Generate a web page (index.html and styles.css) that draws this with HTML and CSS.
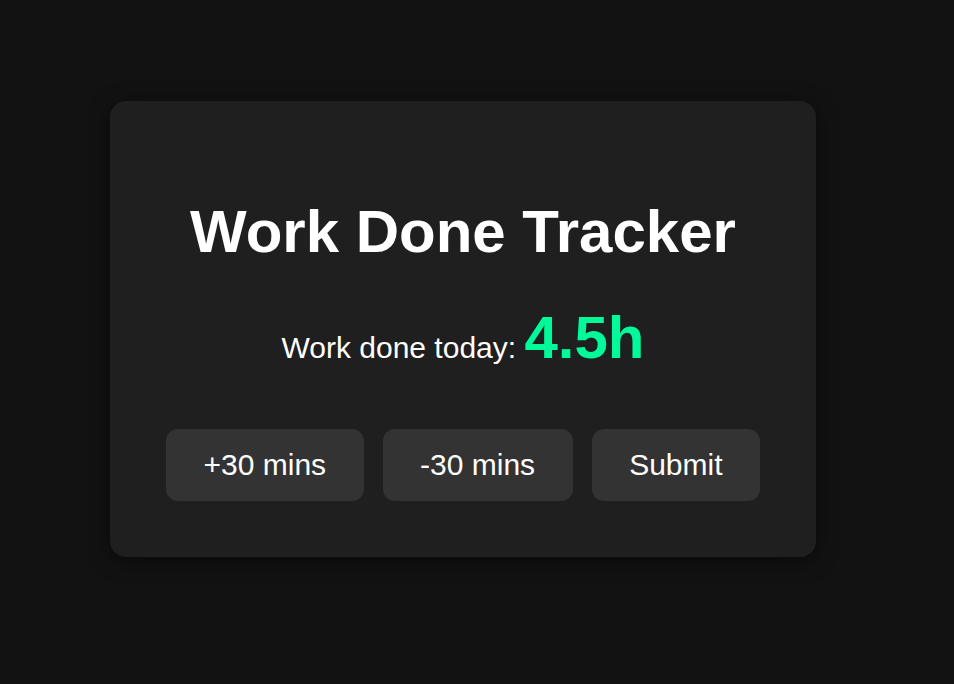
FILE: index.html
```html
<!DOCTYPE html>
<html lang="en">
<head>
<meta charset="utf-8">
<title>Work Done Tracker</title>
<link rel="stylesheet" href="styles.css">
</head>
<body>
  <main class="card">
    <h1 class="title">Work Done Tracker</h1>
    <p class="status">Work done today: <span class="hours">4.5h</span></p>
    <div class="actions">
      <button class="btn" type="button">+30 mins</button>
      <button class="btn" type="button">-30 mins</button>
      <button class="btn" type="button">Submit</button>
    </div>
  </main>
</body>
</html>
```

FILE: styles.css
```css
html, body {
  margin: 0;
  background: #121212;
}

body {
  min-height: 100vh;
  box-sizing: border-box;
  padding: 101px 0 0 110px;
  font-family: "Liberation Sans", Arial, sans-serif;
  color: #ffffff;
}

.card {
  display: inline-block;
  background: #1f1f1f;
  border-radius: 16px;
  padding: 56px;
  text-align: center;
  box-shadow: 0 4px 20px rgba(0, 0, 0, 0.5);
}

.title {
  margin: 40px 0 37px;
  font-size: 60px;
  font-weight: 700;
  line-height: 69px;
}

.status {
  margin: 0;
  font-size: 30px;
}

.hours {
  font-size: 60px;
  font-weight: 700;
  color: #00fa9a;
}

.actions {
  display: flex;
  justify-content: center;
  gap: 19px;
  margin-top: 57px;
}

.btn {
  font-family: "Liberation Sans", Arial, sans-serif;
  font-size: 30px;
  line-height: 34.5px;
  color: #ffffff;
  background: #333333;
  border: none;
  border-radius: 12px;
  padding: 18.75px 37.5px;
  cursor: pointer;
}
```
